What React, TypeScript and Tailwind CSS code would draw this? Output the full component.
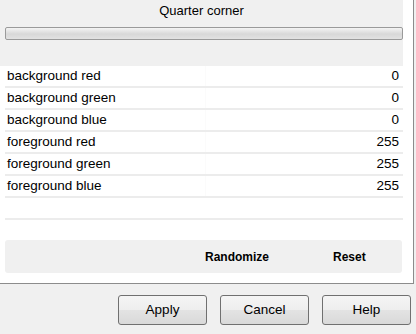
const rows = [
  { name: 'background red', value: 0 },
  { name: 'background green', value: 0 },
  { name: 'background blue', value: 0 },
  { name: 'foreground red', value: 255 },
  { name: 'foreground green', value: 255 },
  { name: 'foreground blue', value: 255 },
];

const App = () => {
  return (
    <div className="w-[416px] h-[334px] bg-[#f0f0f0] text-black font-['Liberation_Sans',Arial,sans-serif] flex flex-col overflow-hidden">
      {/* Settings frame */}
      <div className="w-[414px] h-[284px] bg-white border-r border-b border-[#8c8c8c] flex">
        <div className="w-[403px] flex flex-col">
          {/* Header */}
          <div className="h-[66px] bg-[#f0f0f0] pt-[3px]">
            <div className="h-[16px] leading-[16px] text-[13px] text-center">Quarter corner</div>
            <div className="ml-[5px] mt-[8px] w-[398px] h-[13px] rounded-[2px] border border-[#9a9a9a] bg-[linear-gradient(to_bottom,#f4f4f4,#d8d8d8_55%,#e2e2e2)]" />
          </div>

          {/* Parameter rows */}
          {rows.map((row) => (
            <div key={row.name}>
              <div className="h-[20px] flex items-center text-[13.5px]">
                <span className="w-[205px] pl-[7px]">{row.name}</span>
                <span className="flex-1 h-full flex items-center justify-end pr-[4px] border-l border-[#fbfbfb]">
                  {row.value}
                </span>
              </div>
              <div className="ml-[5px] h-[2px] bg-[#ececec]" />
            </div>
          ))}
          <div className="h-[20px]" />
          <div className="ml-[5px] h-[2px] bg-[#ececec]" />

          {/* Actions */}
          <div className="mt-[20px] ml-[5px] w-[397px] h-[33px] rounded-[3px] bg-[#f0f0f0] flex items-center text-[12px] font-bold">
            <span className="ml-[200px]">Randomize</span>
            <span className="ml-[64px]">Reset</span>
          </div>
        </div>
      </div>

      {/* Dialog buttons */}
      <div className="mt-[11px] pl-[118px] flex gap-[13px]">
        {['Apply', 'Cancel', 'Help'].map((label) => (
          <button
            key={label}
            className="w-[89px] h-[30px] rounded-[3px] border border-[#707070] text-[13.5px] bg-[linear-gradient(to_bottom,#f5f5f5_0%,#eeeeee_50%,#e3e3e3_51%,#d9d9d9_100%)]"
          >
            {label}
          </button>
        ))}
      </div>
    </div>
  );
};

export default App;
